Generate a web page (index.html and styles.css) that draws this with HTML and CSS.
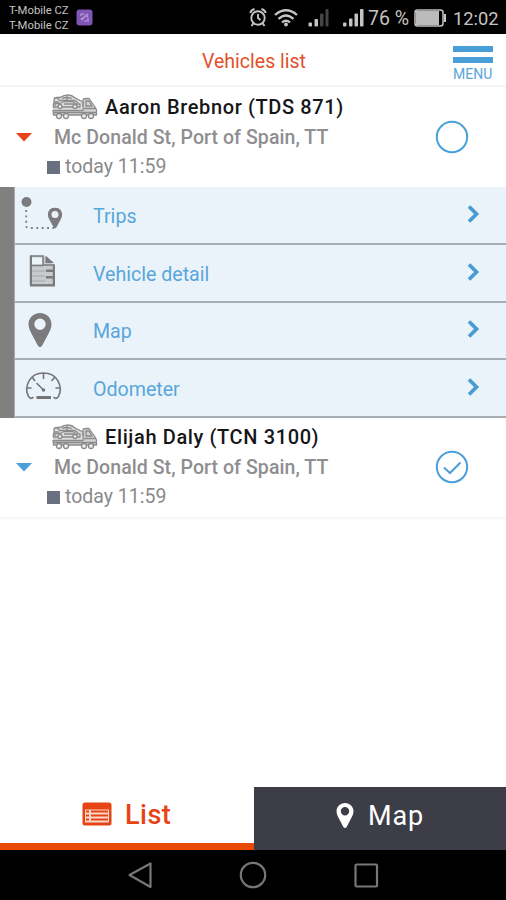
FILE: index.html
```html
<!DOCTYPE html>
<html lang="en">
<head>
<meta charset="utf-8">
<title>Vehicles list</title>
<link rel="stylesheet" href="styles.css">
</head>
<body>
<svg class="defs" width="0" height="0" aria-hidden="true">
  <symbol id="truck" viewBox="0 0 46 26">
    <path d="M2 4L10 2Q16 0 23 3L30 7V16H2Z" fill="#dedede"/><path d="M31 6Q31 4.500 34 4.500H37L44.500 15V21H1.500V17H31Z" fill="#d2d2d2"/>
    <g fill="none" stroke="#8b8b8b" stroke-width="1.300" stroke-linejoin="round">
      <path d="M2 14.500Q.5 11 2 9V6Q2 3.500 5 3.500H8Q12 1 16 1T23 4L28 6.500L31 8V12M2 8H7M5 4L8 6.500H23L26 9M10 4.500Q14 2.500 20 4.500M15 2V6"/>
      <path d="M3 12V9.500H8L12 7.500H21L24 10H28V13H3ZM12 10H22"/>
      <path d="M1 16.500H31V6Q31 4.500 34 4.500H37L43 13L44.500 16V21H1.500ZM34 7H37L40 12H34ZM2 18.500H44M32 14.500H43"/>
      <g fill="#eee"><circle cx="8" cy="12.500" r="2"/><circle cx="23" cy="12.500" r="2"/><circle cx="7" cy="22" r="2.500"/><circle cx="14" cy="22" r="2.500"/><circle cx="32" cy="22" r="2.500"/><circle cx="39" cy="22" r="2.500"/></g>
    </g>
  </symbol>
  <symbol id="chevron" viewBox="0 0 14 20"><path d="M2 2.500L9.500 10L2 17.500" fill="none" stroke="#489bd3" stroke-width="3.700"/></symbol>
  <symbol id="pin" viewBox="0 0 24 34"><path fill="currentColor" fill-rule="evenodd" d="M12 0C5.300 0 .5 5 .5 11.300C.5 16 3 19.500 5 23.500L9.800 32.500Q12 35.500 14.200 32.500L19 23.500C21 19.500 23.500 16 23.500 11.300C23.500 5 18.700 0 12 0ZM12 5.500A5.700 5.700 0 1 1 12 16.900A5.700 5.700 0 1 1 12 5.500Z"/></symbol>
</svg>
<div class="screen">
  <div class="status">
    <div class="carriers"><span>T-Mobile CZ</span><span>T-Mobile CZ</span></div>
    <svg class="app-badge" width="17" height="17" viewBox="0 0 17 17"><rect x=".5" y=".5" width="16" height="16" rx="3" fill="#8055b5"/><path d="M5 7V5H9M12 9V12H8M5 11L12 5M5 9L7 11M10 6L12 8" fill="none" stroke="#b9a0d8" stroke-width="1.200"/></svg>
    <svg class="signals" width="118" height="22" viewBox="0 0 118 22">
      <g fill="none" stroke="#c4c4c4" stroke-width="1.900">
        <circle cx="10" cy="12" r="6.700"/><path d="M2.300 7Q3 4 6.500 3M17.700 7Q17 4 13.500 3M5.500 17L3.500 20M14.500 17L16.500 20M10 8V12L12.500 14"/>
        <path d="M27 9Q38 -.5 49 9M30.500 13Q38 6 45.500 13M34 16.500Q38 13 42 16.500" stroke-width="2.300"/>
      </g>
      <circle cx="38" cy="18.500" r="1.900" fill="#c4c4c4"/>
      <g fill="#c4c4c4"><rect x="60.500" y="16.500" width="3.500" height="4" rx="1"/><rect x="66.500" y="13" width="3.500" height="7.500" rx="1"/><rect x="95" y="16.500" width="3.500" height="4" rx="1"/><rect x="101" y="12.500" width="3.500" height="8" rx="1"/><rect x="106.500" y="7.500" width="3.500" height="13" rx="1"/><rect x="112" y="3" width="3.500" height="17.500" rx="1"/></g>
      <g fill="#444"><rect x="72" y="7.500" width="3.500" height="13" rx="1"/><rect x="77.500" y="3" width="3" height="17.500" rx="1"/></g>
    </svg>
    <span class="percent">76 %</span>
    <svg class="battery" width="33" height="18" viewBox="0 0 33 18"><rect x="1" y="1" width="28" height="16" rx="2.500" fill="none" stroke="#c4c4c4" stroke-width="1.500"/><rect x="2" y="2" width="23" height="14" fill="#bbb"/><path d="M30 5H32V13H30Z" fill="#c4c4c4"/></svg>
    <span class="clock">12:02</span>
  </div>

  <header class="header">
    <h1>Vehicles list</h1>
    <div class="menu-button"><i></i><i></i><span>MENU</span></div>
  </header>

  <main>
    <section class="vehicle">
      <svg class="caret open" width="16" height="9" viewBox="0 0 16 9"><path d="M0 0H16L8 8.500Z" fill="currentColor"/></svg>
      <div class="info">
        <div class="name"><svg width="46" height="26"><use href="#truck"/></svg><b>Aaron Brebnor (TDS 871)</b></div>
        <div class="address">Mc Donald St, Port of Spain, TT</div>
        <div class="time"><i></i><span>today 11:59</span></div>
      </div>
      <svg class="check" width="34" height="34" viewBox="0 0 34 34"><circle cx="17" cy="17" r="15.200"/></svg>
    </section>

    <nav class="actions">
      <div class="action">
        <svg width="46" height="38" viewBox="0 0 46 38"><circle cx="8.500" cy="6" r="5" fill="#7b7b7d"/><path d="M8.200 14V29.500Q8.200 32 11 32H36" fill="none" stroke="#7b7b7d" stroke-width="1.800" stroke-dasharray="1.900 3.500"/><use href="#pin" x="29" y="11.500" width="16" height="21"/></svg>
        <span class="label">Trips</span><svg class="chevron" width="14" height="20"><use href="#chevron"/></svg>
      </div>
      <div class="action">
        <svg width="46" height="38" viewBox="0 0 46 38"><g transform="translate(0 -.5)"><path d="M12.500 2.500H26L35.500 11V31.500H12.500Z" fill="#c7cbce"/><path d="M14 4H25V11H14Z" fill="#ecf3f9"/><path d="M12.500 2.500H25V11.500H35.500V31.500H12.500V2.500M14 12H25" fill="none" stroke="#7b7b7d" stroke-width="1.500"/><path d="M14 17.500H27M14 22.500H27M14 27.500H27" stroke="#a5a9ac"/><path d="M13 2V32H36V11" fill="none" stroke="#7b7b7d" stroke-width="2"/><path d="M27.500 2L36 9.500H27.500ZM28 16H36V18.500H28ZM28 22.500H36V25H28Z" fill="#7b7b7d"/></g></svg>
        <span class="label">Vehicle detail</span><svg class="chevron" width="14" height="20"><use href="#chevron"/></svg>
      </div>
      <div class="action">
        <svg width="46" height="38" viewBox="0 0 46 38"><use href="#pin" x="10" y="2" width="24" height="34"/></svg>
        <span class="label">Map</span><svg class="chevron" width="14" height="20"><use href="#chevron"/></svg>
      </div>
      <div class="action">
        <svg width="46" height="38" viewBox="0 0 46 38"><g fill="none" stroke="#747577" stroke-width="1.600"><path d="M15.500 28Q13 31 10.500 27.500C5.500 17 12 4 25.500 4S45.500 17 40.500 27.500Q38 31 35.500 28M25.500 4V10M14.500 8.500L17 12M36.500 8.500L33.500 12M8.500 19H13.500M37.500 19H42.500M18.500 14L25.500 21"/><path d="M18.500 28.500H33" stroke-width="3"/></g><circle cx="25.500" cy="21" r="1.800" fill="#747577"/></svg>
        <span class="label">Odometer</span><svg class="chevron" width="14" height="20"><use href="#chevron"/></svg>
      </div>
    </nav>

    <section class="vehicle last">
      <svg class="caret" width="16" height="9" viewBox="0 0 16 9"><path d="M0 0H16L8 8.500Z" fill="currentColor"/></svg>
      <div class="info">
        <div class="name"><svg width="46" height="26"><use href="#truck"/></svg><b>Elijah Daly (TCN 3100)</b></div>
        <div class="address">Mc Donald St, Port of Spain, TT</div>
        <div class="time"><i></i><span>today 11:59</span></div>
      </div>
      <svg class="check" width="34" height="34" viewBox="0 0 34 34"><circle cx="17" cy="17" r="15.200"/><path d="M9 17.500L15 23L25.500 12.500"/></svg>
    </section>
  </main>

  <div class="tabs">
    <div class="tab list"><svg width="30" height="24" viewBox="0 0 30 24"><rect x=".5" y=".5" width="29" height="23" rx="2.500" fill="#e64414"/><path d="M3 7.500H27V20.500H3Z" fill="#fbd8ca"/><path d="M4 9.500H7M4 13.500H7M4 17.500H7M9 9.500H26M9 13.500H26M9 17.500H26" stroke="#e64414" stroke-width="2"/></svg><span>List</span></div>
    <div class="tab map-tab"><svg width="18" height="25"><use href="#pin"/></svg><span>Map</span></div>
  </div>
  <div class="system-nav">
    <svg width="25" height="28" viewBox="0 0 25 28"><path d="M2.500 14L23.500 2.500V26Z"/></svg>
    <svg width="28" height="28" viewBox="0 0 28 28"><circle cx="14" cy="14" r="12.200"/></svg>
    <svg width="25" height="28" viewBox="0 0 25 28"><rect x="1.500" y="3.500" width="21.500" height="22" rx="1"/></svg>
  </div>
</div>
</body>
</html>
```
FILE: styles.css
```css
* { box-sizing: border-box; }
body { margin: 0; background: #fff; font-family: Roboto, "Liberation Sans", sans-serif; }
svg { display: block; flex: none; }
.defs { position: absolute; }
.screen { width: 506px; height: 900px; display: flex; flex-direction: column; background: #fff; overflow: hidden; }
span, b, .address { white-space: nowrap; }

.status { height: 34px; flex: none; display: flex; align-items: center; background: #000; color: #c4c4c4; padding-left: 9px; }
.carriers { display: flex; flex-direction: column; width: 67px; padding-top: 2px; font-size: 11.300px; line-height: 15.500px; }
.app-badge { margin-top: 1px; }
.signals { margin-left: 155px; }
.percent { width: 46px; margin-left: 2px; margin-top: 2px; font-size: 19.500px; }
.battery { margin-top: 2px; }
.clock { margin-left: 6px; margin-top: 2px; font-size: 18.300px; }

.header { height: 53px; flex: none; display: grid; grid-template-columns: 1fr auto 1fr; align-items: center; padding: 0 13px 0 15px; border-bottom: 2px solid #f5f5f5; }
.header h1 { grid-column: 2; margin: 4px 0 0; font-size: 19.500px; line-height: 24px; font-weight: 400; color: #e2502c; }
.menu-button { justify-self: end; width: 40px; display: flex; flex-direction: column; margin-top: 7px; }
.menu-button i { height: 6px; margin-bottom: 5px; background: #489fd8; }
.menu-button span { font-size: 14px; line-height: 13px; color: #58a6da; }

.vehicle { height: 100px; display: flex; padding: 5px 37px 0 16px; }
.caret { margin-top: 41px; color: #4ba0da; }
.caret.open { color: #e8431a; }
.info { flex: 1; margin-left: 14px; }
.name { height: 30px; display: flex; align-items: center; gap: 7px; padding-left: 6px; }
.name b { font-size: 20px; letter-spacing: .62px; font-weight: 500; color: #161618; }
.address { padding: 1px 0 0 8px; font-size: 19.500px; line-height: 29px; letter-spacing: .07px; font-weight: 500; color: #8e8e90; }
.time { height: 28px; display: flex; align-items: center; gap: 5px; padding-left: 1px; font-size: 19.500px; color: #8a8a8c; }
.time i { width: 13px; height: 13px; margin-top: 2px; background: #697080; }
.check { margin-top: 28px; fill: none; stroke: #48a0da; stroke-width: 2; }
.vehicle.last { border-bottom: 2px solid #f7f7f7; height: 101px; padding-top: 4px; }

.actions { height: 231px; display: grid; grid-template-rows: repeat(4, 1fr); border-left: 14px solid #808080; background: #ebf3fa; }
.action { display: flex; align-items: center; padding: 0 25px 0 4px; border-left: 1px solid #a4acb2; border-bottom: 2px solid #a6adb3; color: #7b7b7d; }
.label { flex: 1; margin: 3px 0 0 29px; font-size: 19.600px; color: #58a6da; }
.action > svg:first-child { margin-left: -1px; }
.action > .chevron { margin-top: -2px; }

.tabs { height: 63px; flex: none; display: grid; grid-template-columns: 254px 252px; margin-top: auto; font-size: 27px; font-weight: 500; }
.tab { display: flex; align-items: center; }
.list { padding-left: 82px; gap: 13px; color: #e64414; border-bottom: 7px solid #e84a04; letter-spacing: .5px; }
.list svg { margin-top: -3px; }
.map-tab { padding: 0 0 6px 82px; gap: 14px; background: #3c3d47; color: #fff; font-weight: 400; letter-spacing: .9px; }
.system-nav { height: 50px; flex: none; display: flex; align-items: center; justify-content: center; gap: 87px; background: #000; fill: none; stroke: #777; stroke-width: 2.200; stroke-linejoin: round; }
```
